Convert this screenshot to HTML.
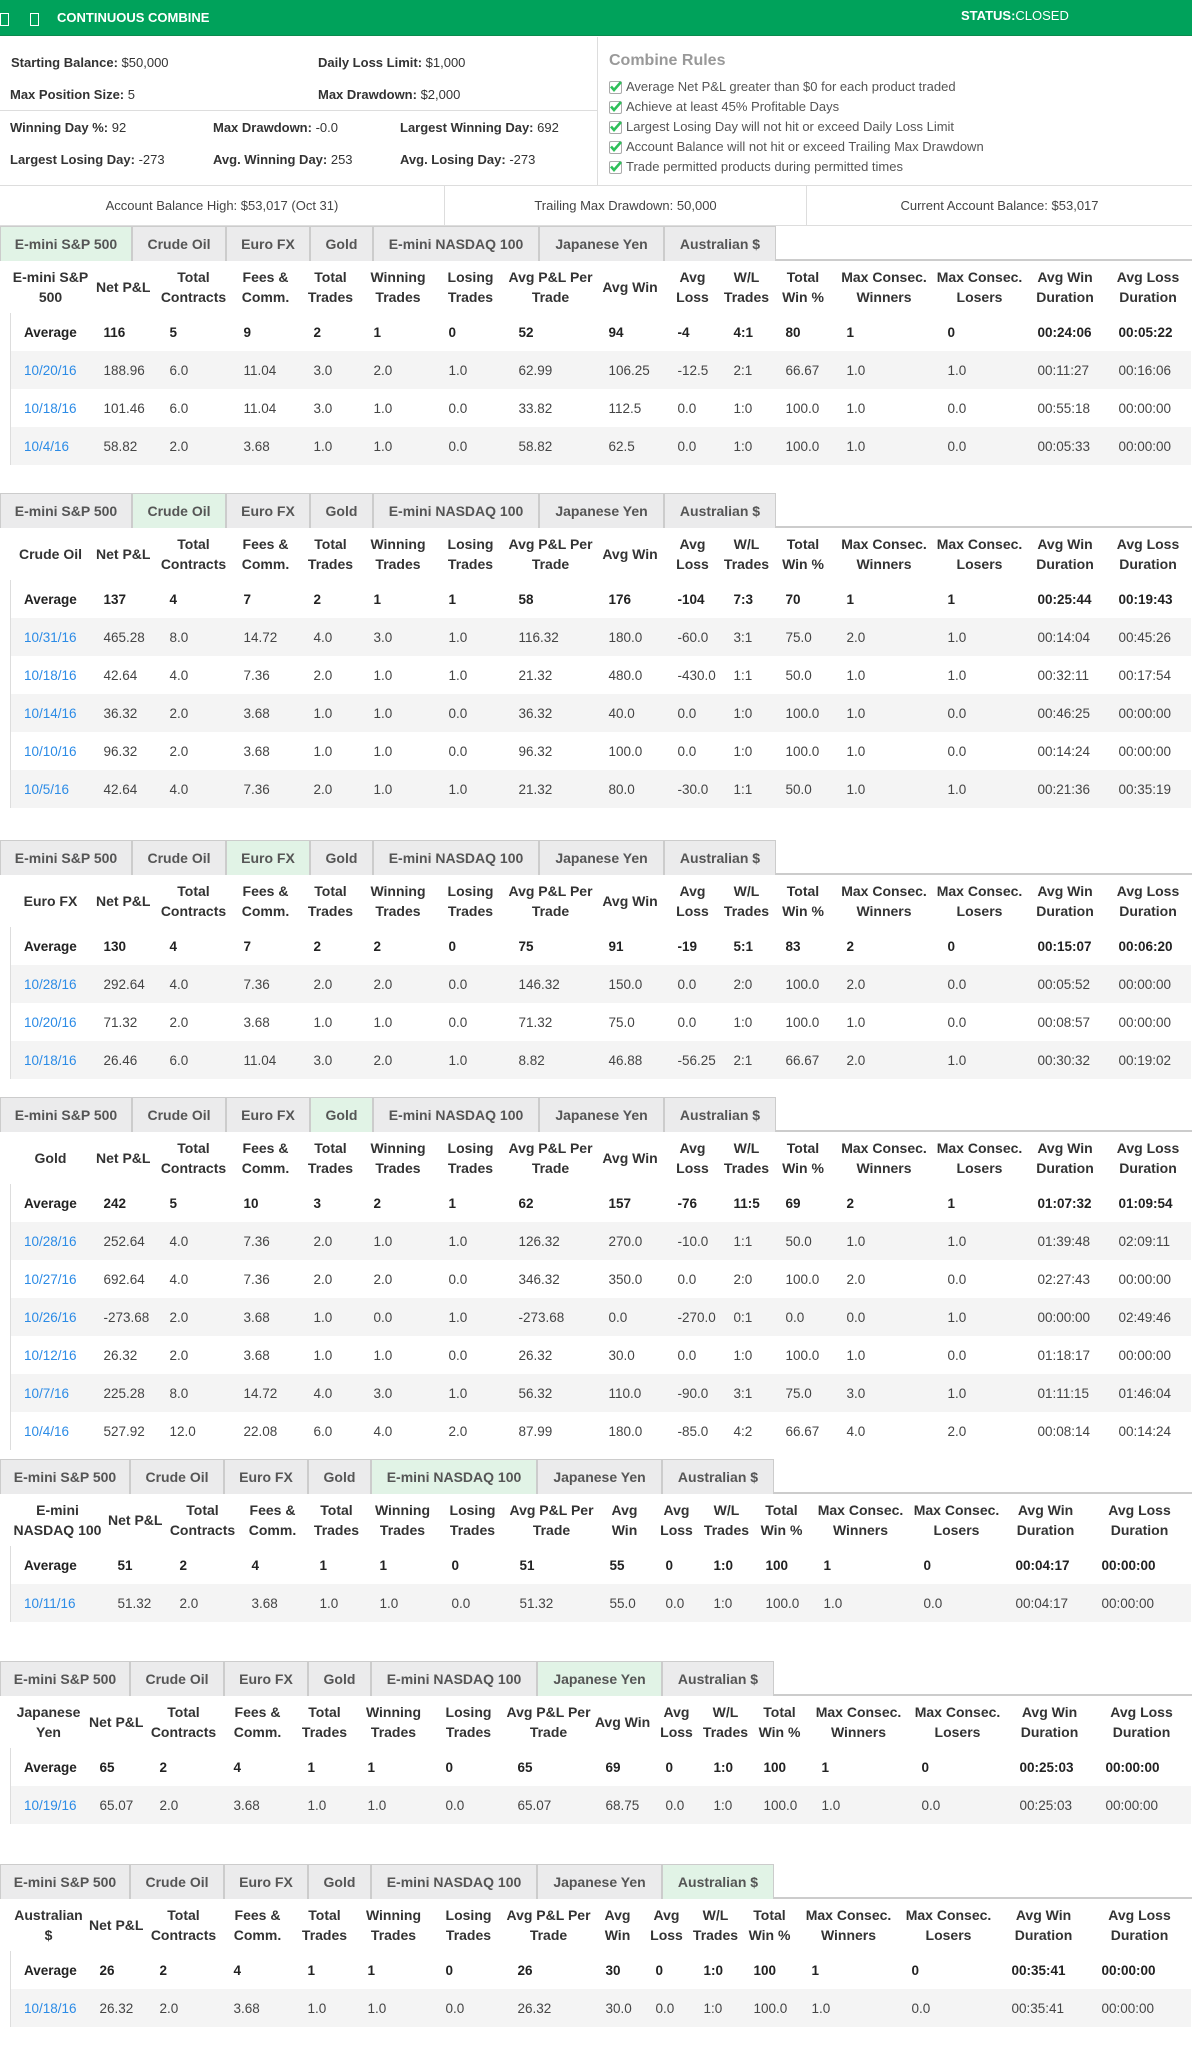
<!DOCTYPE html>
<html><head><meta charset="utf-8">
<style>
*{box-sizing:border-box;margin:0;padding:0}
body{width:1192px;height:2048px;position:relative;background:#fff;font-family:"Liberation Sans",Arial,sans-serif;color:#333;overflow:hidden}
.hdr{position:absolute;left:0;top:0;width:1192px;height:36px;background:#00a25b;border-bottom:1px solid #0b8a4e}
.bx{position:absolute;top:13px;width:9px;height:13px;border:1.5px solid #fff}
.hdr .t{position:absolute;left:57px;top:10px;color:#fff;font-weight:bold;font-size:13px}
.hdr .s{position:absolute;left:961px;top:8px;color:#fff;font-size:13px}
.lab{position:absolute;font-size:13px;white-space:nowrap}
.lab b{font-weight:bold}
.hl{position:absolute;height:1px;background:#ddd}
.vl{position:absolute;width:1px;background:#ddd}
.rules{position:absolute;left:609px;top:52px}
.rules h3{font-size:16px;color:#999;font-weight:bold;margin-bottom:7px}
.rules div{font-size:13px;color:#555;height:20px;line-height:20px;position:relative;padding-left:17px;white-space:nowrap}
.cb{position:absolute;left:0;top:4px;width:13px;height:13px;border:1px solid #aaa;border-radius:2px;background:#fff}
.bal{position:absolute;top:187px;height:38px;line-height:38px;font-size:13px;color:#444;text-align:center}
.sec{position:absolute;left:0;width:1192px}
.tabs{height:35px;border-bottom:2px solid #ccc;position:relative}
.tab{position:absolute;top:0;height:35px;background:#ebebec;border:1px solid #ccc;border-bottom:none;font-weight:bold;font-size:14px;color:#555;text-align:center;line-height:34px}
.tab.a{background:#e1f3e6}
table{border-collapse:collapse;table-layout:fixed;width:1180px;margin-left:10px;font-size:13.5px}
th{font-weight:bold;font-size:14px;text-align:center;height:52px;line-height:20px;vertical-align:middle;padding:0 1px;color:#333}
td{height:38px;padding-left:13px;white-space:nowrap;color:#444}
tr.av td{font-weight:bold;color:#222;background:#fff}
tr.s td{background:#f4f4f4}
td a{color:#2b8be6;text-decoration:none}
tbody{border-left:1px solid #ddd}
</style></head><body>
<div class="hdr"><div class="bx" style="left:0"></div><div class="bx" style="left:30px"></div><div class="t">CONTINUOUS COMBINE</div><div class="s"><b>STATUS:</b>CLOSED</div></div>

<div class="lab" style="left:11px;top:55px"><b>Starting Balance:</b> $50,000</div>
<div class="lab" style="left:318px;top:55px"><b>Daily Loss Limit:</b> $1,000</div>
<div class="lab" style="left:10px;top:87px"><b>Max Position Size:</b> 5</div>
<div class="lab" style="left:318px;top:87px"><b>Max Drawdown:</b> $2,000</div>
<div class="hl" style="left:0;top:110px;width:597px"></div>
<div class="lab" style="left:10px;top:120px"><b>Winning Day %:</b> 92</div>
<div class="lab" style="left:213px;top:120px"><b>Max Drawdown:</b> -0.0</div>
<div class="lab" style="left:400px;top:120px"><b>Largest Winning Day:</b> 692</div>
<div class="lab" style="left:10px;top:152px"><b>Largest Losing Day:</b> -273</div>
<div class="lab" style="left:213px;top:152px"><b>Avg. Winning Day:</b> 253</div>
<div class="lab" style="left:400px;top:152px"><b>Avg. Losing Day:</b> -273</div>
<div class="vl" style="left:597px;top:37px;height:148px"></div>
<div class="rules"><h3>Combine Rules</h3>
<div><span class="cb"><svg width="13" height="13" viewBox="0 0 13 13" style="position:absolute;left:-1px;top:-2px"><path d="M2 6.5 L5 10 L12 2" stroke="#2fbf5a" stroke-width="2.6" fill="none"/></svg></span>Average Net P&amp;L greater than $0 for each product traded</div>
<div><span class="cb"><svg width="13" height="13" viewBox="0 0 13 13" style="position:absolute;left:-1px;top:-2px"><path d="M2 6.5 L5 10 L12 2" stroke="#2fbf5a" stroke-width="2.6" fill="none"/></svg></span>Achieve at least 45% Profitable Days</div>
<div><span class="cb"><svg width="13" height="13" viewBox="0 0 13 13" style="position:absolute;left:-1px;top:-2px"><path d="M2 6.5 L5 10 L12 2" stroke="#2fbf5a" stroke-width="2.6" fill="none"/></svg></span>Largest Losing Day will not hit or exceed Daily Loss Limit</div>
<div><span class="cb"><svg width="13" height="13" viewBox="0 0 13 13" style="position:absolute;left:-1px;top:-2px"><path d="M2 6.5 L5 10 L12 2" stroke="#2fbf5a" stroke-width="2.6" fill="none"/></svg></span>Account Balance will not hit or exceed Trailing Max Drawdown</div>
<div><span class="cb"><svg width="13" height="13" viewBox="0 0 13 13" style="position:absolute;left:-1px;top:-2px"><path d="M2 6.5 L5 10 L12 2" stroke="#2fbf5a" stroke-width="2.6" fill="none"/></svg></span>Trade permitted products during permitted times</div>
</div>
<div class="hl" style="left:0;top:185px;width:1192px"></div>
<div class="bal" style="left:0;width:444px">Account Balance High: $53,017 (Oct 31)</div>
<div class="vl" style="left:444px;top:185px;height:40px"></div>
<div class="bal" style="left:445px;width:361px">Trailing Max Drawdown: 50,000</div>
<div class="vl" style="left:806px;top:185px;height:40px"></div>
<div class="bal" style="left:807px;width:385px">Current Account Balance: $53,017</div>
<div class="hl" style="left:0;top:225px;width:1192px"></div>

<!-- Section 1 -->
<div class="sec" style="top:226px">
<div class="tabs"><div class="tab a" style="left:0;width:132px">E-mini S&amp;P 500</div><div class="tab" style="left:132px;width:94px">Crude Oil</div><div class="tab" style="left:226px;width:84px">Euro FX</div><div class="tab" style="left:310px;width:63px">Gold</div><div class="tab" style="left:373px;width:166px">E-mini NASDAQ 100</div><div class="tab" style="left:539px;width:125px">Japanese Yen</div><div class="tab" style="left:664px;width:112px">Australian $</div></div>
<table><colgroup><col style="width:80px"><col style="width:66px"><col style="width:74px"><col style="width:70px"><col style="width:60px"><col style="width:75px"><col style="width:70px"><col style="width:90px"><col style="width:69px"><col style="width:56px"><col style="width:52px"><col style="width:61px"><col style="width:101px"><col style="width:90px"><col style="width:81px"><col style="width:85px"></colgroup>
<thead><tr><th>E-mini S&amp;P 500</th><th>Net P&amp;L</th><th>Total Contracts</th><th>Fees &amp; Comm.</th><th>Total Trades</th><th>Winning Trades</th><th>Losing Trades</th><th>Avg P&amp;L Per Trade</th><th>Avg Win</th><th>Avg Loss</th><th>W/L Trades</th><th>Total Win %</th><th>Max Consec. Winners</th><th>Max Consec. Losers</th><th>Avg Win Duration</th><th>Avg Loss Duration</th></tr></thead>
<tbody>
<tr class="av"><td>Average</td><td>116</td><td>5</td><td>9</td><td>2</td><td>1</td><td>0</td><td>52</td><td>94</td><td>-4</td><td>4:1</td><td>80</td><td>1</td><td>0</td><td>00:24:06</td><td>00:05:22</td></tr>
<tr class="s"><td><a>10/20/16</a></td><td>188.96</td><td>6.0</td><td>11.04</td><td>3.0</td><td>2.0</td><td>1.0</td><td>62.99</td><td>106.25</td><td>-12.5</td><td>2:1</td><td>66.67</td><td>1.0</td><td>1.0</td><td>00:11:27</td><td>00:16:06</td></tr>
<tr><td><a>10/18/16</a></td><td>101.46</td><td>6.0</td><td>11.04</td><td>3.0</td><td>1.0</td><td>0.0</td><td>33.82</td><td>112.5</td><td>0.0</td><td>1:0</td><td>100.0</td><td>1.0</td><td>0.0</td><td>00:55:18</td><td>00:00:00</td></tr>
<tr class="s"><td><a>10/4/16</a></td><td>58.82</td><td>2.0</td><td>3.68</td><td>1.0</td><td>1.0</td><td>0.0</td><td>58.82</td><td>62.5</td><td>0.0</td><td>1:0</td><td>100.0</td><td>1.0</td><td>0.0</td><td>00:05:33</td><td>00:00:00</td></tr>
</tbody></table></div>

<!-- Section 2 -->
<div class="sec" style="top:493px">
<div class="tabs"><div class="tab" style="left:0;width:132px">E-mini S&amp;P 500</div><div class="tab a" style="left:132px;width:94px">Crude Oil</div><div class="tab" style="left:226px;width:84px">Euro FX</div><div class="tab" style="left:310px;width:63px">Gold</div><div class="tab" style="left:373px;width:166px">E-mini NASDAQ 100</div><div class="tab" style="left:539px;width:125px">Japanese Yen</div><div class="tab" style="left:664px;width:112px">Australian $</div></div>
<table><colgroup><col style="width:80px"><col style="width:66px"><col style="width:74px"><col style="width:70px"><col style="width:60px"><col style="width:75px"><col style="width:70px"><col style="width:90px"><col style="width:69px"><col style="width:56px"><col style="width:52px"><col style="width:61px"><col style="width:101px"><col style="width:90px"><col style="width:81px"><col style="width:85px"></colgroup>
<thead><tr><th>Crude Oil</th><th>Net P&amp;L</th><th>Total Contracts</th><th>Fees &amp; Comm.</th><th>Total Trades</th><th>Winning Trades</th><th>Losing Trades</th><th>Avg P&amp;L Per Trade</th><th>Avg Win</th><th>Avg Loss</th><th>W/L Trades</th><th>Total Win %</th><th>Max Consec. Winners</th><th>Max Consec. Losers</th><th>Avg Win Duration</th><th>Avg Loss Duration</th></tr></thead>
<tbody>
<tr class="av"><td>Average</td><td>137</td><td>4</td><td>7</td><td>2</td><td>1</td><td>1</td><td>58</td><td>176</td><td>-104</td><td>7:3</td><td>70</td><td>1</td><td>1</td><td>00:25:44</td><td>00:19:43</td></tr>
<tr class="s"><td><a>10/31/16</a></td><td>465.28</td><td>8.0</td><td>14.72</td><td>4.0</td><td>3.0</td><td>1.0</td><td>116.32</td><td>180.0</td><td>-60.0</td><td>3:1</td><td>75.0</td><td>2.0</td><td>1.0</td><td>00:14:04</td><td>00:45:26</td></tr>
<tr><td><a>10/18/16</a></td><td>42.64</td><td>4.0</td><td>7.36</td><td>2.0</td><td>1.0</td><td>1.0</td><td>21.32</td><td>480.0</td><td>-430.0</td><td>1:1</td><td>50.0</td><td>1.0</td><td>1.0</td><td>00:32:11</td><td>00:17:54</td></tr>
<tr class="s"><td><a>10/14/16</a></td><td>36.32</td><td>2.0</td><td>3.68</td><td>1.0</td><td>1.0</td><td>0.0</td><td>36.32</td><td>40.0</td><td>0.0</td><td>1:0</td><td>100.0</td><td>1.0</td><td>0.0</td><td>00:46:25</td><td>00:00:00</td></tr>
<tr><td><a>10/10/16</a></td><td>96.32</td><td>2.0</td><td>3.68</td><td>1.0</td><td>1.0</td><td>0.0</td><td>96.32</td><td>100.0</td><td>0.0</td><td>1:0</td><td>100.0</td><td>1.0</td><td>0.0</td><td>00:14:24</td><td>00:00:00</td></tr>
<tr class="s"><td><a>10/5/16</a></td><td>42.64</td><td>4.0</td><td>7.36</td><td>2.0</td><td>1.0</td><td>1.0</td><td>21.32</td><td>80.0</td><td>-30.0</td><td>1:1</td><td>50.0</td><td>1.0</td><td>1.0</td><td>00:21:36</td><td>00:35:19</td></tr>
</tbody></table></div>

<!-- Section 3 -->
<div class="sec" style="top:840px">
<div class="tabs"><div class="tab" style="left:0;width:132px">E-mini S&amp;P 500</div><div class="tab" style="left:132px;width:94px">Crude Oil</div><div class="tab a" style="left:226px;width:84px">Euro FX</div><div class="tab" style="left:310px;width:63px">Gold</div><div class="tab" style="left:373px;width:166px">E-mini NASDAQ 100</div><div class="tab" style="left:539px;width:125px">Japanese Yen</div><div class="tab" style="left:664px;width:112px">Australian $</div></div>
<table><colgroup><col style="width:80px"><col style="width:66px"><col style="width:74px"><col style="width:70px"><col style="width:60px"><col style="width:75px"><col style="width:70px"><col style="width:90px"><col style="width:69px"><col style="width:56px"><col style="width:52px"><col style="width:61px"><col style="width:101px"><col style="width:90px"><col style="width:81px"><col style="width:85px"></colgroup>
<thead><tr><th>Euro FX</th><th>Net P&amp;L</th><th>Total Contracts</th><th>Fees &amp; Comm.</th><th>Total Trades</th><th>Winning Trades</th><th>Losing Trades</th><th>Avg P&amp;L Per Trade</th><th>Avg Win</th><th>Avg Loss</th><th>W/L Trades</th><th>Total Win %</th><th>Max Consec. Winners</th><th>Max Consec. Losers</th><th>Avg Win Duration</th><th>Avg Loss Duration</th></tr></thead>
<tbody>
<tr class="av"><td>Average</td><td>130</td><td>4</td><td>7</td><td>2</td><td>2</td><td>0</td><td>75</td><td>91</td><td>-19</td><td>5:1</td><td>83</td><td>2</td><td>0</td><td>00:15:07</td><td>00:06:20</td></tr>
<tr class="s"><td><a>10/28/16</a></td><td>292.64</td><td>4.0</td><td>7.36</td><td>2.0</td><td>2.0</td><td>0.0</td><td>146.32</td><td>150.0</td><td>0.0</td><td>2:0</td><td>100.0</td><td>2.0</td><td>0.0</td><td>00:05:52</td><td>00:00:00</td></tr>
<tr><td><a>10/20/16</a></td><td>71.32</td><td>2.0</td><td>3.68</td><td>1.0</td><td>1.0</td><td>0.0</td><td>71.32</td><td>75.0</td><td>0.0</td><td>1:0</td><td>100.0</td><td>1.0</td><td>0.0</td><td>00:08:57</td><td>00:00:00</td></tr>
<tr class="s"><td><a>10/18/16</a></td><td>26.46</td><td>6.0</td><td>11.04</td><td>3.0</td><td>2.0</td><td>1.0</td><td>8.82</td><td>46.88</td><td>-56.25</td><td>2:1</td><td>66.67</td><td>2.0</td><td>1.0</td><td>00:30:32</td><td>00:19:02</td></tr>
</tbody></table></div>

<!-- Section 4 -->
<div class="sec" style="top:1097px">
<div class="tabs"><div class="tab" style="left:0;width:132px">E-mini S&amp;P 500</div><div class="tab" style="left:132px;width:94px">Crude Oil</div><div class="tab" style="left:226px;width:84px">Euro FX</div><div class="tab a" style="left:310px;width:63px">Gold</div><div class="tab" style="left:373px;width:166px">E-mini NASDAQ 100</div><div class="tab" style="left:539px;width:125px">Japanese Yen</div><div class="tab" style="left:664px;width:112px">Australian $</div></div>
<table><colgroup><col style="width:80px"><col style="width:66px"><col style="width:74px"><col style="width:70px"><col style="width:60px"><col style="width:75px"><col style="width:70px"><col style="width:90px"><col style="width:69px"><col style="width:56px"><col style="width:52px"><col style="width:61px"><col style="width:101px"><col style="width:90px"><col style="width:81px"><col style="width:85px"></colgroup>
<thead><tr><th>Gold</th><th>Net P&amp;L</th><th>Total Contracts</th><th>Fees &amp; Comm.</th><th>Total Trades</th><th>Winning Trades</th><th>Losing Trades</th><th>Avg P&amp;L Per Trade</th><th>Avg Win</th><th>Avg Loss</th><th>W/L Trades</th><th>Total Win %</th><th>Max Consec. Winners</th><th>Max Consec. Losers</th><th>Avg Win Duration</th><th>Avg Loss Duration</th></tr></thead>
<tbody>
<tr class="av"><td>Average</td><td>242</td><td>5</td><td>10</td><td>3</td><td>2</td><td>1</td><td>62</td><td>157</td><td>-76</td><td>11:5</td><td>69</td><td>2</td><td>1</td><td>01:07:32</td><td>01:09:54</td></tr>
<tr class="s"><td><a>10/28/16</a></td><td>252.64</td><td>4.0</td><td>7.36</td><td>2.0</td><td>1.0</td><td>1.0</td><td>126.32</td><td>270.0</td><td>-10.0</td><td>1:1</td><td>50.0</td><td>1.0</td><td>1.0</td><td>01:39:48</td><td>02:09:11</td></tr>
<tr><td><a>10/27/16</a></td><td>692.64</td><td>4.0</td><td>7.36</td><td>2.0</td><td>2.0</td><td>0.0</td><td>346.32</td><td>350.0</td><td>0.0</td><td>2:0</td><td>100.0</td><td>2.0</td><td>0.0</td><td>02:27:43</td><td>00:00:00</td></tr>
<tr class="s"><td><a>10/26/16</a></td><td>-273.68</td><td>2.0</td><td>3.68</td><td>1.0</td><td>0.0</td><td>1.0</td><td>-273.68</td><td>0.0</td><td>-270.0</td><td>0:1</td><td>0.0</td><td>0.0</td><td>1.0</td><td>00:00:00</td><td>02:49:46</td></tr>
<tr><td><a>10/12/16</a></td><td>26.32</td><td>2.0</td><td>3.68</td><td>1.0</td><td>1.0</td><td>0.0</td><td>26.32</td><td>30.0</td><td>0.0</td><td>1:0</td><td>100.0</td><td>1.0</td><td>0.0</td><td>01:18:17</td><td>00:00:00</td></tr>
<tr class="s"><td><a>10/7/16</a></td><td>225.28</td><td>8.0</td><td>14.72</td><td>4.0</td><td>3.0</td><td>1.0</td><td>56.32</td><td>110.0</td><td>-90.0</td><td>3:1</td><td>75.0</td><td>3.0</td><td>1.0</td><td>01:11:15</td><td>01:46:04</td></tr>
<tr><td><a>10/4/16</a></td><td>527.92</td><td>12.0</td><td>22.08</td><td>6.0</td><td>4.0</td><td>2.0</td><td>87.99</td><td>180.0</td><td>-85.0</td><td>4:2</td><td>66.67</td><td>4.0</td><td>2.0</td><td>00:08:14</td><td>00:14:24</td></tr>
</tbody></table></div>

<!-- Section 5 -->
<div class="sec" style="top:1459px">
<div class="tabs"><div class="tab" style="left:0;width:130px">E-mini S&amp;P 500</div><div class="tab" style="left:130px;width:94px">Crude Oil</div><div class="tab" style="left:224px;width:84px">Euro FX</div><div class="tab" style="left:308px;width:63px">Gold</div><div class="tab a" style="left:371px;width:166px">E-mini NASDAQ 100</div><div class="tab" style="left:537px;width:125px">Japanese Yen</div><div class="tab" style="left:662px;width:112px">Australian $</div></div>
<table><colgroup><col style="width:94px"><col style="width:62px"><col style="width:72px"><col style="width:68px"><col style="width:60px"><col style="width:72px"><col style="width:68px"><col style="width:90px"><col style="width:56px"><col style="width:48px"><col style="width:52px"><col style="width:58px"><col style="width:100px"><col style="width:92px"><col style="width:86px"><col style="width:102px"></colgroup>
<thead><tr><th>E-mini NASDAQ 100</th><th>Net P&amp;L</th><th>Total Contracts</th><th>Fees &amp; Comm.</th><th>Total Trades</th><th>Winning Trades</th><th>Losing Trades</th><th>Avg P&amp;L Per Trade</th><th>Avg Win</th><th>Avg Loss</th><th>W/L Trades</th><th>Total Win %</th><th>Max Consec. Winners</th><th>Max Consec. Losers</th><th>Avg Win Duration</th><th>Avg Loss Duration</th></tr></thead>
<tbody>
<tr class="av"><td>Average</td><td>51</td><td>2</td><td>4</td><td>1</td><td>1</td><td>0</td><td>51</td><td>55</td><td>0</td><td>1:0</td><td>100</td><td>1</td><td>0</td><td>00:04:17</td><td>00:00:00</td></tr>
<tr class="s"><td><a>10/11/16</a></td><td>51.32</td><td>2.0</td><td>3.68</td><td>1.0</td><td>1.0</td><td>0.0</td><td>51.32</td><td>55.0</td><td>0.0</td><td>1:0</td><td>100.0</td><td>1.0</td><td>0.0</td><td>00:04:17</td><td>00:00:00</td></tr>
</tbody></table></div>

<!-- Section 6 -->
<div class="sec" style="top:1661px">
<div class="tabs"><div class="tab" style="left:0;width:130px">E-mini S&amp;P 500</div><div class="tab" style="left:130px;width:94px">Crude Oil</div><div class="tab" style="left:224px;width:84px">Euro FX</div><div class="tab" style="left:308px;width:63px">Gold</div><div class="tab" style="left:371px;width:166px">E-mini NASDAQ 100</div><div class="tab a" style="left:537px;width:125px">Japanese Yen</div><div class="tab" style="left:662px;width:112px">Australian $</div></div>
<table><colgroup><col style="width:76px"><col style="width:60px"><col style="width:74px"><col style="width:74px"><col style="width:60px"><col style="width:78px"><col style="width:72px"><col style="width:88px"><col style="width:60px"><col style="width:48px"><col style="width:50px"><col style="width:58px"><col style="width:100px"><col style="width:98px"><col style="width:86px"><col style="width:98px"></colgroup>
<thead><tr><th>Japanese Yen</th><th>Net P&amp;L</th><th>Total Contracts</th><th>Fees &amp; Comm.</th><th>Total Trades</th><th>Winning Trades</th><th>Losing Trades</th><th>Avg P&amp;L Per Trade</th><th>Avg Win</th><th>Avg Loss</th><th>W/L Trades</th><th>Total Win %</th><th>Max Consec. Winners</th><th>Max Consec. Losers</th><th>Avg Win Duration</th><th>Avg Loss Duration</th></tr></thead>
<tbody>
<tr class="av"><td>Average</td><td>65</td><td>2</td><td>4</td><td>1</td><td>1</td><td>0</td><td>65</td><td>69</td><td>0</td><td>1:0</td><td>100</td><td>1</td><td>0</td><td>00:25:03</td><td>00:00:00</td></tr>
<tr class="s"><td><a>10/19/16</a></td><td>65.07</td><td>2.0</td><td>3.68</td><td>1.0</td><td>1.0</td><td>0.0</td><td>65.07</td><td>68.75</td><td>0.0</td><td>1:0</td><td>100.0</td><td>1.0</td><td>0.0</td><td>00:25:03</td><td>00:00:00</td></tr>
</tbody></table></div>

<!-- Section 7 -->
<div class="sec" style="top:1864px">
<div class="tabs"><div class="tab" style="left:0;width:130px">E-mini S&amp;P 500</div><div class="tab" style="left:130px;width:94px">Crude Oil</div><div class="tab" style="left:224px;width:84px">Euro FX</div><div class="tab" style="left:308px;width:63px">Gold</div><div class="tab" style="left:371px;width:166px">E-mini NASDAQ 100</div><div class="tab" style="left:537px;width:125px">Japanese Yen</div><div class="tab a" style="left:662px;width:112px">Australian $</div></div>
<table><colgroup><col style="width:76px"><col style="width:60px"><col style="width:74px"><col style="width:74px"><col style="width:60px"><col style="width:78px"><col style="width:72px"><col style="width:88px"><col style="width:50px"><col style="width:48px"><col style="width:50px"><col style="width:58px"><col style="width:100px"><col style="width:100px"><col style="width:90px"><col style="width:102px"></colgroup>
<thead><tr><th>Australian $</th><th>Net P&amp;L</th><th>Total Contracts</th><th>Fees &amp; Comm.</th><th>Total Trades</th><th>Winning Trades</th><th>Losing Trades</th><th>Avg P&amp;L Per Trade</th><th>Avg Win</th><th>Avg Loss</th><th>W/L Trades</th><th>Total Win %</th><th>Max Consec. Winners</th><th>Max Consec. Losers</th><th>Avg Win Duration</th><th>Avg Loss Duration</th></tr></thead>
<tbody>
<tr class="av"><td>Average</td><td>26</td><td>2</td><td>4</td><td>1</td><td>1</td><td>0</td><td>26</td><td>30</td><td>0</td><td>1:0</td><td>100</td><td>1</td><td>0</td><td>00:35:41</td><td>00:00:00</td></tr>
<tr class="s"><td><a>10/18/16</a></td><td>26.32</td><td>2.0</td><td>3.68</td><td>1.0</td><td>1.0</td><td>0.0</td><td>26.32</td><td>30.0</td><td>0.0</td><td>1:0</td><td>100.0</td><td>1.0</td><td>0.0</td><td>00:35:41</td><td>00:00:00</td></tr>
</tbody></table></div>
</body></html>
